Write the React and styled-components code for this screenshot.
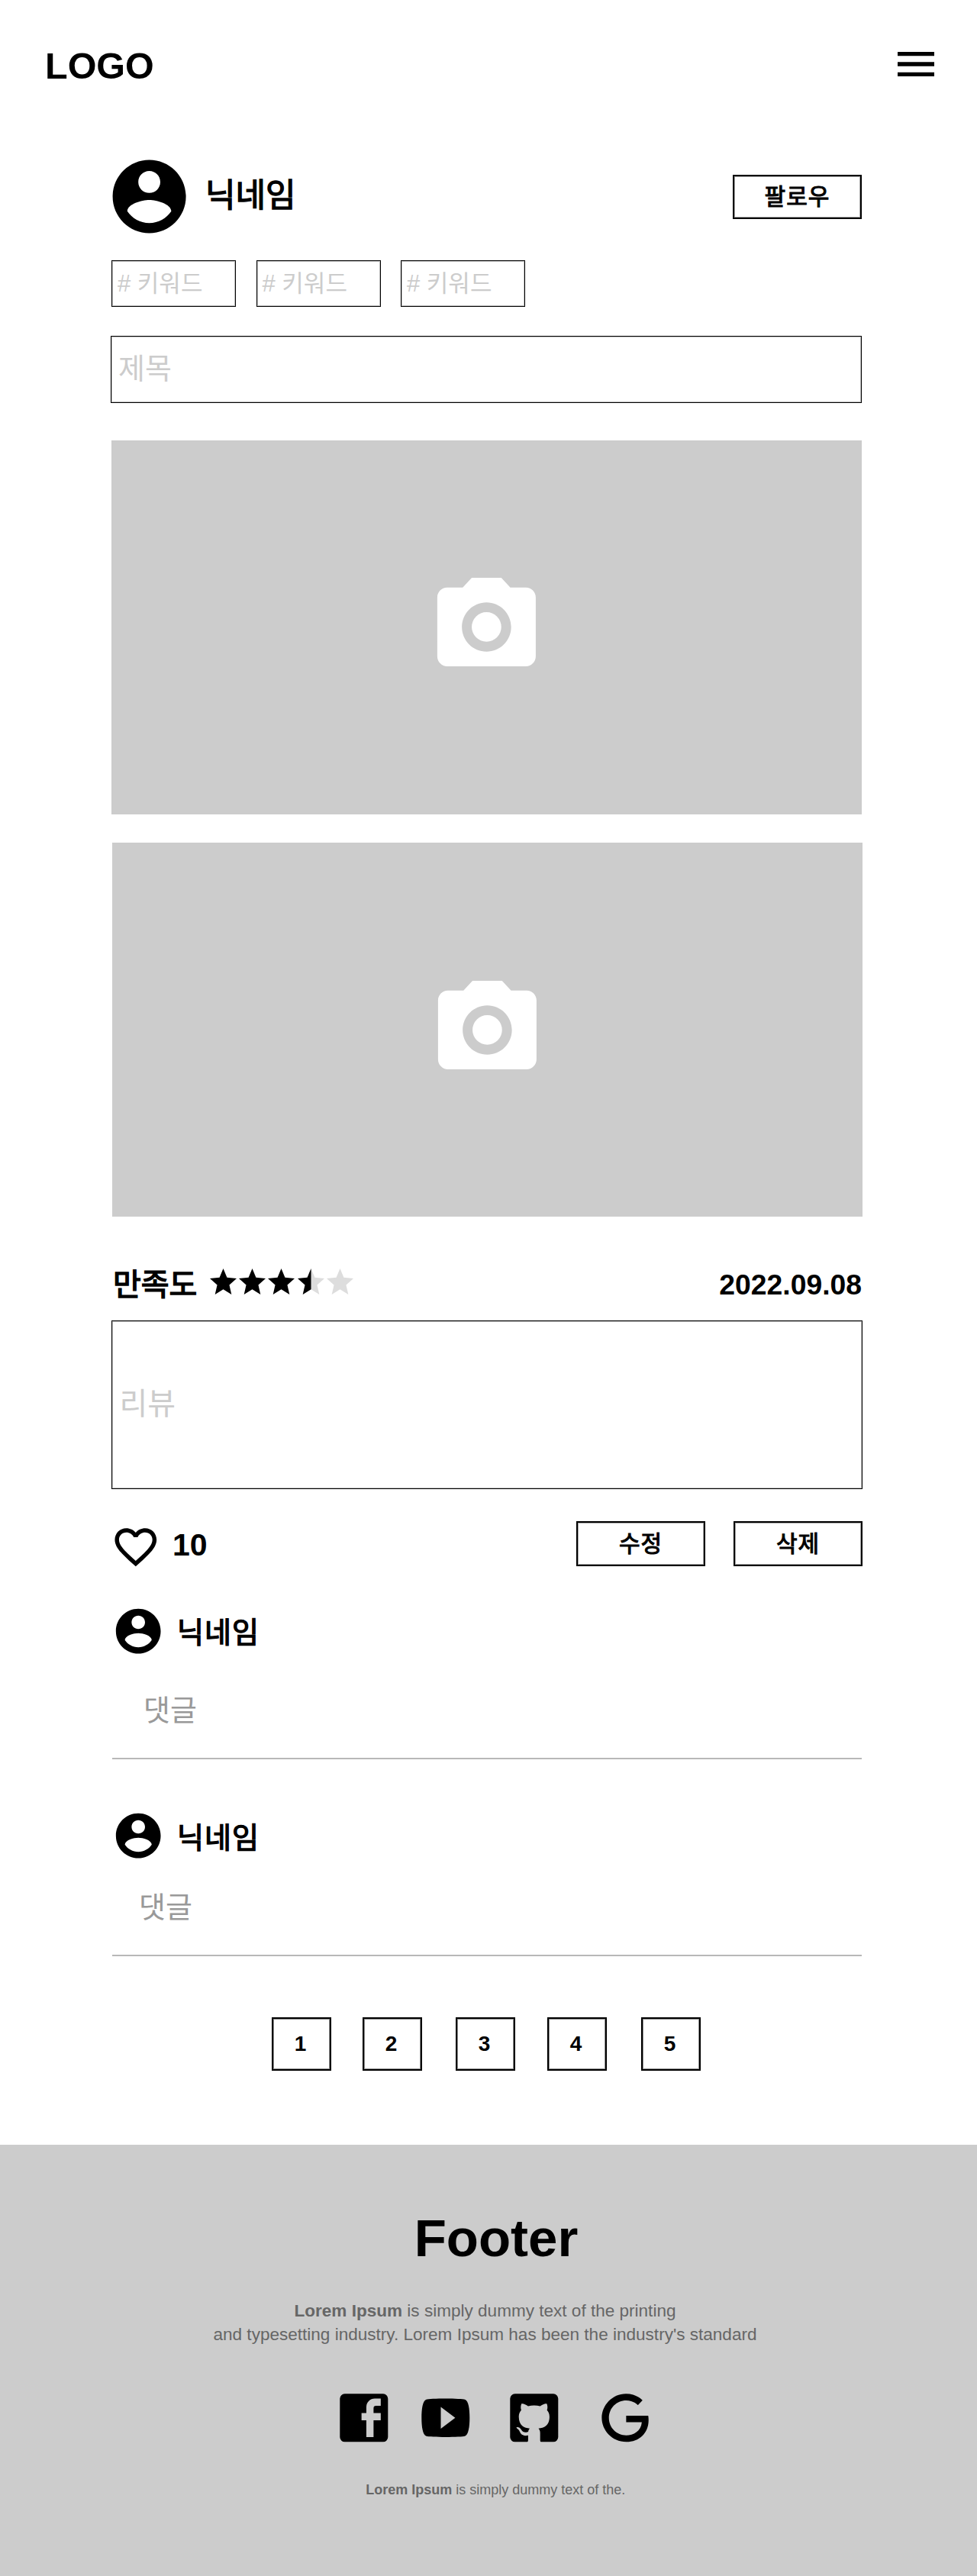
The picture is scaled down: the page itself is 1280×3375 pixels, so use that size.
import React from "react";
import styled, { createGlobalStyle } from "styled-components";

const GlobalStyle = createGlobalStyle`
  * { box-sizing: border-box; }
  body {
    margin: 0;
    background: #fff;
    color: #000;
    font-family: "Liberation Sans", "Noto Sans CJK KR", sans-serif;
  }
  h1, h2, p { margin: 0; }
  button { font-family: inherit; color: inherit; padding: 0; background: none; }
`;

const Page = styled.div`
  width: 1280px;
  height: 3375px;
  display: flex;
  flex-direction: column;
`;

const Header = styled.header`
  height: 210px;
  padding: 51.7px 48px 0 59px;
  display: flex;
  justify-content: space-between;
  align-items: flex-start;
`;

const Logo = styled.h1`
  font-size: 48.5px;
  line-height: 56px;
  padding-top: 6px;
`;

const Icon = styled.svg`
  display: block;
  flex: none;
  width: ${(p) => p.$size}px;
  height: ${(p) => p.$size}px;
  fill: ${(p) => p.$color || "#000"};
`;

const Main = styled.main`
  width: 984px;
  margin-left: 146px;
  height: 2600px;
  display: flex;
  flex-direction: column;
`;

const Row = styled.div`
  display: flex;
  align-items: flex-start;
  height: ${(p) => (p.$height ? `${p.$height}px` : "auto")};
`;

const Avatar = styled.div`
  width: ${(p) => p.$size}px;
  height: ${(p) => p.$size}px;
  margin: ${(p) => p.$margin};
  display: flex;
  justify-content: center;
  align-items: center;
`;

const Nickname = styled.span`
  font-weight: 400;
  -webkit-text-stroke: 1.4px #000;
  font-size: ${(p) => p.$size}px;
  line-height: 50px;
  letter-spacing: ${(p) => p.$spacing || 0}px;
  margin-top: ${(p) => p.$top}px;
`;

const Button = styled.button`
  width: 169px;
  height: ${(p) => p.$height || 58}px;
  border: 2px solid #000;
  box-shadow: inset 0 0 0 1px rgba(0, 0, 0, 0.35);
  font-size: 30px;
  font-weight: 400;
  -webkit-text-stroke: 1.1px #000;
  letter-spacing: 1px;
  line-height: 50px;
  margin-left: ${(p) => p.$gap || "auto"};
  margin-right: ${(p) => p.$right || 0}px;
  margin-top: ${(p) => p.$top || 0}px;
`;

const Field = styled.div`
  width: ${(p) => p.$width}px;
  height: ${(p) => p.$height}px;
  flex: none;
  border: 1px solid #000;
  box-shadow: inset 0 0 0 1px rgba(0, 0, 0, 0.25);
  margin-left: ${(p) => p.$left || 0}px;
  padding-left: ${(p) => p.$indent}px;
  padding-bottom: ${(p) => p.$lift || 0}px;
  display: flex;
  align-items: center;
  color: #ccc;
  font-size: ${(p) => p.$font}px;
`;

const Keywords = styled.div`
  display: flex;
  gap: 26.5px;
  height: 134px;
  padding-top: 35px;
`;

const Photo = styled.div`
  width: 983px;
  height: 490px;
  margin-top: ${(p) => p.$top}px;
  margin-left: ${(p) => p.$left || 0}px;
  padding-bottom: ${(p) => p.$lift || 0}px;
  background: #ccc;
  display: flex;
  align-items: center;
  justify-content: center;
  flex: none;
`;

const Rating = styled.div`
  height: 136px;
  display: flex;
  align-items: flex-start;
  padding-top: 66px;
`;

const Label = styled.span`
  font-weight: 400;
  -webkit-text-stroke: 1.5px #000;
  font-size: 40px;
  line-height: 50px;
  margin: -2px 0 0 2px;
`;

const Stars = styled.div`
  display: flex;
  gap: 3.2px;
  margin: 2.4px 0 0 16.6px;
`;

const Star = styled.svg`
  display: block;
  width: 35px;
  height: 34px;
`;

const DateText = styled.span`
  margin: -2px 1px 0 auto;
  font-weight: 700;
  font-size: 37.3px;
  line-height: 50px;
`;

const Count = styled.span`
  font-weight: 700;
  font-size: 41px;
  line-height: 50px;
  margin: 48px 0 0 15px;
`;

const Comment = styled.article`
  width: 982px;
  height: ${(p) => p.$height}px;
  flex: none;
  border-bottom: 2px solid #b8b8b8;
  margin-left: 1px;
`;

const CommentText = styled.p`
  color: #999;
  font-size: 38px;
  line-height: 50px;
  margin: ${(p) => p.$margin};
`;

const Pagination = styled.nav`
  display: flex;
  margin: 80px 0 0 210px;
`;

const PageButton = styled.button`
  width: 78px;
  height: 70px;
  border: 2px solid #000;
  box-shadow: inset 0 0 0 1px rgba(0, 0, 0, 0.45);
  font-weight: 700;
  font-size: 28px;
  padding-right: 3px;
  margin-right: ${(p) => p.$gap}px;
`;

const Footer = styled.footer`
  height: 565px;
  background: #ccc;
  color: #666;
  display: flex;
  flex-direction: column;
  align-items: center;
`;

const FooterTitle = styled.h2`
  color: #000;
  font-size: 69px;
  line-height: 80px;
  margin: 83px 0 0 20px;
`;

const FooterText = styled.p`
  font-size: ${(p) => p.$size}px;
  line-height: 31px;
  text-align: center;
  white-space: nowrap;
  margin: ${(p) => p.$margin};
`;

const Social = styled.div`
  display: flex;
  width: 420px;
  height: 76px;
  margin: 55.5px 0 0 17.4px;
`;

const SocialLink = styled.a`
  display: block;
  margin-right: ${(p) => p.$gap}px;
`;

const paths = {
  menu: "M3 18h18v-2H3v2zm0-5h18v-2H3v2zm0-7v2h18V6H3z",
  account:
    "M12 2C6.48 2 2 6.48 2 12s4.48 10 10 10 10-4.48 10-10S17.52 2 12 2zm0 3c1.66 0 3 1.34 3 3s-1.34 3-3 3-3-1.34-3-3 1.34-3 3-3zm0 14.2c-2.5 0-4.71-1.28-6-3.22.03-1.99 4-3.08 6-3.08 1.99 0 5.97 1.09 6 3.08-1.29 1.94-3.5 3.22-6 3.22z",
  camera:
    "M9 2L7.17 4H4c-1.1 0-2 .9-2 2v12c0 1.1.9 2 2 2h16c1.1 0 2-.9 2-2V6c0-1.1-.9-2-2-2h-3.17L15 2H9zm3 15c-2.76 0-5-2.24-5-5s2.24-5 5-5 5 2.24 5 5-2.24 5-5 5zM12 9a3 3 0 1 0 0 6 3 3 0 1 0 0-6z",
  heart:
    "M16.5 3c-1.74 0-3.41.81-4.5 2.09C10.91 3.81 9.24 3 7.5 3 4.42 3 2 5.42 2 8.5c0 3.78 3.4 6.86 8.55 11.54L12 21.35l1.45-1.32C18.6 15.36 22 12.28 22 8.5 22 5.42 19.58 3 16.5 3zm-4.4 15.55l-.1.1-.1-.1C7.14 14.24 4 11.39 4 8.5 4 6.5 5.5 5 7.5 5c1.54 0 3.04.99 3.57 2.36h1.87C13.46 5.99 14.96 5 16.5 5c2 0 3.5 1.5 3.5 3.5 0 2.89-3.14 5.74-7.9 10.05z",
  facebook:
    "M4,2H20A2,2 0 0,1 22,4V20A2,2 0 0,1 20,22H4A2,2 0 0,1 2,20V4A2,2 0 0,1 4,2M19,4H16.5A3.5,3.5 0 0,0 13,7.5V10H11V13H13V20H16V13H19V10H16V8A1,1 0 0,1 17,7H19V4Z",
  youtube:
    "M10,16.5V7.5L16,12M20,4.4C19.4,4.2 15.7,4 12,4C8.3,4 4.6,4.19 4,4.38C2.44,4.9 2,8.4 2,12C2,15.59 2.44,19.1 4,19.61C4.6,19.81 8.3,20 12,20C15.7,20 19.4,19.81 20,19.61C21.56,19.1 22,15.59 22,12C22,8.4 21.56,4.91 20,4.4Z",
  github:
    "M4,2H20A2,2 0 0,1 22,4V20A2,2 0 0,1 20,22H14.85C14.5,21.92 14.5,21.24 14.5,21V18.26C14.5,17.33 14.17,16.72 13.81,16.41C16.04,16.16 18.38,15.32 18.38,11.5C18.38,10.39 18,9.5 17.35,8.79C17.45,8.54 17.8,7.5 17.25,6.15C17.25,6.15 16.41,5.88 14.5,7.17C13.71,6.95 12.85,6.84 12,6.84C11.15,6.84 10.29,6.95 9.5,7.17C7.59,5.88 6.75,6.15 6.75,6.15C6.2,7.5 6.55,8.54 6.65,8.79C6,9.5 5.62,10.39 5.62,11.5C5.62,15.31 7.95,16.17 10.17,16.42C9.89,16.67 9.63,17.11 9.54,17.76C8.97,18 7.5,18.45 6.63,16.93C6.63,16.93 6.1,15.97 5.1,15.9C5.1,15.9 4.12,15.88 5,16.5C5,16.5 5.68,16.81 6.14,17.97C6.14,17.97 6.73,19.91 9.5,19.31V21C9.5,21.24 9.5,21.92 9.14,22H4A2,2 0 0,1 2,20V4A2,2 0 0,1 4,2Z",
  google:
    "M21.35,11.1H12.18V13.83H18.69C18.36,17.64 15.19,19.27 12.19,19.27C8.36,19.27 5,16.25 5,12C5,7.9 8.2,4.73 12.2,4.73C15.29,4.73 17.1,6.7 17.1,6.7L19,4.72C19,4.72 16.56,2 12.1,2C6.42,2 2.03,6.8 2.03,12C2.03,17.05 6.16,22 12.25,22C17.6,22 21.5,18.33 21.5,12.91C21.5,11.76 21.35,11.1 21.35,11.1V11.1Z",
};

function Glyph({ name, size, color }) {
  return (
    <Icon viewBox="0 0 24 24" $size={size} $color={color} aria-hidden="true">
      <path fillRule="evenodd" d={paths[name]} />
    </Icon>
  );
}

const STAR =
  "M12 17.27L18.18 21l-1.64-7.03L22 9.24l-7.19-.61L12 2 9.19 8.63 2 9.24l5.46 4.73L5.82 21z";
const LEFT_HALF = "M12 17.27V2L9.19 8.63 2 9.24l5.46 4.73L5.82 21z";

function RatingStar({ fill }) {
  return (
    <Star viewBox="2 2 20 19" preserveAspectRatio="none">
      {fill < 1 && <path d={STAR} fill="#ddd" />}
      {fill === 1 && <path d={STAR} />}
      {fill === 0.5 && <path d={LEFT_HALF} />}
    </Star>
  );
}

const keywords = ["# 키워드", "# 키워드", "# 키워드"];

const comments = [
  { height: 244, avatar: "41px 16px 0 -1px", nameTop: 53, text: "44px 0 0 41px" },
  { height: 258, avatar: "65px 16px 0 -1px", nameTop: 78, text: "34px 0 0 35px" },
];

const pages = [
  { n: 1, gap: 41 },
  { n: 2, gap: 44 },
  { n: 3, gap: 42 },
  { n: 4, gap: 45 },
  { n: 5, gap: 0 },
];

const socials = [
  { name: "facebook", gap: 31.4 },
  { name: "youtube", gap: 40.7 },
  { name: "github", gap: 44.1 },
  { name: "google", gap: 0 },
];

export default function App() {
  return (
    <Page>
      <GlobalStyle />
      <Header>
        <Logo>LOGO</Logo>
        <Glyph name="menu" size={64} />
      </Header>
      <Main>
        <Row $height={96}>
          <Avatar $size={96} $margin="0 25px 0 2px">
            <Glyph name="account" size={115.2} />
          </Avatar>
          <Nickname $size={43} $top={21}>닉네임</Nickname>
          <Button $top={19} $right={1}>팔로우</Button>
        </Row>
        <Keywords>
          {keywords.map((k, i) => (
            <Field key={i} $width={163} $height={61} $indent={7} $lift={7} $font={31}>
              {k}
            </Field>
          ))}
        </Keywords>
        <Row $height={123}>
          <Field $width={984} $height={88} $left={-1} $indent={9} $lift={10} $font={38}>
            제목
          </Field>
        </Row>
        <Photo $top={14} $lift={1.6}>
          <Glyph name="camera" size={154.8} color="#fff" />
        </Photo>
        <Photo $top={37} $left={1}>
          <Glyph name="camera" size={154.8} color="#fff" />
        </Photo>
        <Rating>
          <Label>만족도</Label>
          <Stars>
            {[1, 1, 1, 0.5, 0].map((f, i) => (
              <RatingStar key={i} fill={f} />
            ))}
          </Stars>
          <DateText>2022.09.08</DateText>
        </Rating>
        <Field $width={984} $height={221} $indent={9.5} $lift={9} $font={40}>
          리뷰
        </Field>
        <Row $height={110}>
          <Avatar $size={66} $margin="43px 0 0 -1px">
            <Glyph name="heart" size={65.6} />
          </Avatar>
          <Count>10</Count>
          <Button $top={42} $height={59}>수정</Button>
          <Button $top={42} $height={59} $gap="37px">삭제</Button>
        </Row>
        {comments.map((c, i) => (
          <Comment key={i} $height={c.height}>
            <Row>
              <Avatar $size={70} $margin={c.avatar}>
                <Glyph name="account" size={70.4} />
              </Avatar>
              <Nickname $size={38} $spacing={1} $top={c.nameTop}>닉네임</Nickname>
            </Row>
            <CommentText $margin={c.text}>댓글</CommentText>
          </Comment>
        ))}
        <Pagination>
          {pages.map((p) => (
            <PageButton key={p.n} $gap={p.gap}>{p.n}</PageButton>
          ))}
        </Pagination>
      </Main>
      <Footer>
        <FooterTitle>Footer</FooterTitle>
        <FooterText $size={22.55} $margin="39px 9px 0 0">
          <b>Lorem Ipsum</b> is simply dummy text of the printing
          <br />
          and typesetting industry. Lorem Ipsum has been the industry's standard
        </FooterText>
        <Social>
          {socials.map((s) => (
            <SocialLink key={s.name} $gap={s.gap}>
              <Glyph name={s.name} size={75.6} />
            </SocialLink>
          ))}
        </Social>
        <FooterText $size={18} $margin="41px 0 0 18.6px">
          <b>Lorem Ipsum</b> is simply dummy text of the.
        </FooterText>
      </Footer>
    </Page>
  );
}
